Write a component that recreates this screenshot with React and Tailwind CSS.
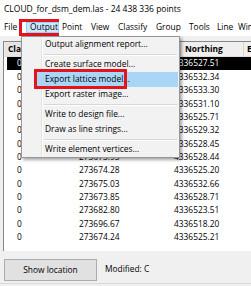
import React from "react";

const menuBar = [
  { label: "File", cls: "w-[15px] pl-0" },
  { label: "Output", cls: "w-[40px] pl-[4px]", active: true },
  { label: "Point", cls: "w-[29px] pl-[3px]" },
  { label: "View", cls: "w-[27px] pl-[3px]" },
  { label: "Classify", cls: "w-[38px] pl-[3px]" },
  { label: "Group", cls: "w-[33px] pl-[3px]" },
  { label: "Tools", cls: "w-[28px] pl-[3px]" },
  { label: "Line", cls: "w-[21px] pl-[3px]" },
  { label: "Window", cls: "w-[40px] pl-[3px]" },
];

const menuItems = [
  "Output alignment report...",
  "-",
  "Create surface model...",
  "Export lattice model...",
  "Export raster image...",
  "-",
  "Write to design file...",
  "Draw as line strings...",
  "-",
  "Write element vertices...",
];

const rows = [
  ["0", "273675.12", "4336527.51"],
  ["0", "273676.40", "4336532.34"],
  ["0", "273674.91", "4336533.30"],
  ["0", "273677.05", "4336531.10"],
  ["0", "273673.62", "4336525.71"],
  ["0", "273675.88", "4336529.32"],
  ["0", "273674.57", "4336528.45"],
  ["0", "273673.93", "4336528.44"],
  ["0", "273674.28", "4336525.20"],
  ["0", "273675.03", "4336532.66"],
  ["0", "273673.85", "4336528.71"],
  ["0", "273682.80", "4336523.51"],
  ["0", "273696.67", "4336518.20"],
  ["0", "273674.24", "4336525.21"],
];

const OutputMenu = () => (
  <div className="absolute left-[21px] top-[36px] z-10 w-[159px] bg-[#f2f2f2] border border-[#979797] shadow-[2px_2px_3px_rgba(0,0,0,0.35)] flex">
    {/* icon gutter */}
    <div className="w-[19px] shrink-0" />
    <div className="flex-1 border-l border-[#e2e3e3] flex flex-col">
      <div className="border-l border-white flex flex-col">
        {menuItems.map((item, i) =>
          item === "-" ? (
            <div key={i} className="h-[5px] flex flex-col justify-center pl-[1px] pr-[2px]">
              <div className="h-px bg-[#d7d7d7]" />
              <div className="h-px bg-white" />
            </div>
          ) : item === "Export lattice model..." ? (
            <div key={i} className="relative h-[15px] flex items-center -ml-[8px] mr-[1px] bg-[#a9d5f6] pl-[10px] text-[8.4px] leading-none">
              {item}
              <div className="absolute -left-[1px] -top-[3px] w-[93px] h-[20px] border-[3px] border-[#e3141c]" />
            </div>
          ) : (
            <div key={i} className="h-[15px] flex items-center pl-[2px] text-[8.4px] leading-none">
              {item}
            </div>
          )
        )}
      </div>
    </div>
  </div>
);

export default function App() {
  return (
    <div className="relative w-[251px] h-[286px] overflow-hidden bg-[#f0f0f0] text-black font-['Open_Sans',sans-serif] flex flex-col">
      <div className="h-[18px] shrink-0 bg-white flex items-center pl-[4px] text-[8.5px] leading-none whitespace-nowrap">
        CLOUD_for_dsm_dem.las - 24 438 336 points
      </div>

      <div className="h-[18px] shrink-0 bg-white flex items-center pl-[4px] text-[8.4px] leading-none whitespace-nowrap overflow-hidden">
        {menuBar.map((m) =>
          m.active ? (
            <div key={m.label} className={`${m.cls} shrink-0 h-[17px] border-[3px] border-[#e3141c] flex`}>
              <div className="flex-1 bg-[#cce8ff] border border-[#99d1ff] flex items-center pl-[3px]">{m.label}</div>
            </div>
          ) : (
            <div key={m.label} className={`${m.cls} shrink-0`}>{m.label}</div>
          )
        )}
      </div>

      <div className="h-[5px] shrink-0" />

      <div className="ml-[3px] h-[210px] shrink-0 bg-white border-l border-t border-[#828790] flex flex-col text-[8.4px] leading-none whitespace-nowrap overflow-hidden">
        <div className="h-[15px] shrink-0 flex bg-[#f1eeee] border-b border-[#e0dcdc] font-bold">
          <div className="w-[96px] shrink-0 ml-[1px] pl-[3px] flex items-center border-r border-[#d8d4d4] bg-[#e9e4e4]">Class</div>
          <div className="w-[80px] shrink-0 pl-[6px] flex items-center border-r border-[#d8d4d4]">Easting</div>
          <div className="w-[63px] shrink-0 pl-[4px] flex items-center border-r border-[#d8d4d4]">Northing</div>
          <div className="shrink-0 pl-[3px] flex items-center">Elevation</div>
        </div>
        {rows.map((r, i) => (
          <div
            key={i}
            className={`h-[13.35px] shrink-0 ml-[3px] flex items-center ${i === 0 ? "bg-black text-white" : ""}`}
          >
            <div className="w-[66px] shrink-0 pl-[10px]">{r[0]}</div>
            <div className="w-[101px] shrink-0 pl-[6px]">{r[1]}</div>
            <div className="w-[70px] shrink-0">{r[2]}</div>
          </div>
        ))}
      </div>

      <div className="flex-1 flex flex-col">
        <div className="mt-[8px] h-[22px] flex items-center text-[8.4px] leading-none">
          <button className="ml-[4px] w-[93px] h-[22px] bg-[#e1e1e1] border border-[#adadad] flex items-center justify-center">
            Show location
          </button>
          <span className="ml-[8px] -mt-[2px]">Modified: C</span>
        </div>
        <div className="mt-[2px] flex-1 border-t border-[#dadada] bg-[#f0f0f0]" />
      </div>

      <OutputMenu />
    </div>
  );
}
